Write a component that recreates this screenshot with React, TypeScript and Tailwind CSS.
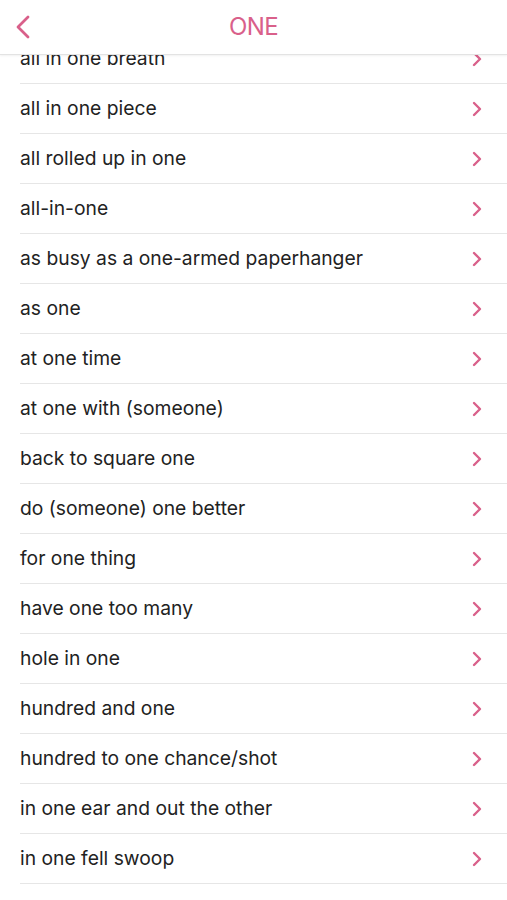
import React from 'react';

const items = [
  'all in one breath',
  'all in one piece',
  'all rolled up in one',
  'all-in-one',
  'as busy as a one-armed paperhanger',
  'as one',
  'at one time',
  'at one with (someone)',
  'back to square one',
  'do (someone) one better',
  'for one thing',
  'have one too many',
  'hole in one',
  'hundred and one',
  'hundred to one chance/shot',
  'in one ear and out the other',
  'in one fell swoop',
];

const Chevron: React.FC = () => (
  <svg width="12" height="16" viewBox="0 0 12 16" fill="none">
    <path d="M3 2l6 6-6 6" stroke="#d9608a" strokeWidth="2.4" strokeLinecap="round" strokeLinejoin="round" />
  </svg>
);

const App: React.FC = () => {
  return (
    <div
      className="w-[507px] h-[900px] bg-white flex flex-col overflow-hidden"
      style={{ fontFamily: 'Inter, "Liberation Sans", sans-serif' }}
    >
      <div className="h-[55px] shrink-0 relative flex items-center justify-center border-b border-[#e3e3e3] shadow-[0_1px_2px_rgba(0,0,0,0.06)] z-10 bg-white">
        <svg className="absolute left-[13px] top-[14px]" width="20" height="26" viewBox="0 0 20 26" fill="none">
          <path d="M15 3L5 13l10 10" stroke="#d9608a" strokeWidth="2.8" strokeLinecap="round" strokeLinejoin="round" />
        </svg>
        <span className="text-[24px] text-[#d9608a] tracking-tight">ONE</span>
      </div>

      <div className="flex-1 overflow-hidden">
        <ul className="-mt-[21px]">
          {items.map((item) => (
            <li key={item} className="ml-[20px] h-[50px] flex items-center justify-between border-b border-[#e6e6e6] pr-[24px]">
              <span className="text-[19.3px] text-[#222222]">{item}</span>
              <Chevron />
            </li>
          ))}
        </ul>
      </div>
    </div>
  );
};

export default App;
